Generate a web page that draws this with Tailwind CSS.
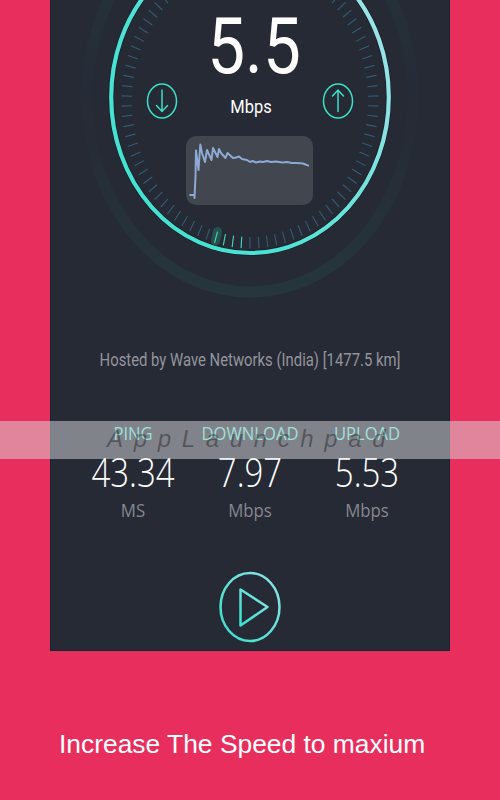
<!DOCTYPE html>
<html lang="en">
<head>
    <meta charset="UTF-8">
    <meta name="viewport" content="width=device-width, initial-scale=1.0">
    <title>Speed Test</title>
    <script src="https://cdn.jsdelivr.net/npm/@tailwindcss/browser@4"></script>
</head>
<body class="bg-[#e82e5c]">
    <div class="relative w-[500px] h-[800px] overflow-hidden bg-[#e82e5c]">

        <main class="relative mx-auto w-[400px] h-[651px] overflow-hidden bg-[#262a35] border-x border-b border-[#112532] flex flex-col items-center font-['Roboto',sans-serif]">
            <!-- gauge -->
            <svg class="absolute -left-px top-0" width="400" height="320" viewBox="50 0 400 320" fill="none">
                <defs>
                    <linearGradient id="ring" x1="0" y1="1" x2="1" y2="0.3">
                        <stop offset="0" stop-color="#3fe2d0"/>
                        <stop offset="0.4" stop-color="#4ce2d3"/>
                        <stop offset="1" stop-color="#9be3e6"/>
                    </linearGradient>
                    <linearGradient id="halo" gradientUnits="userSpaceOnUse" x1="0" y1="0" x2="0" y2="298">
                        <stop offset="0" stop-color="#263038"/>
                        <stop offset="0.25" stop-color="#262c37"/>
                        <stop offset="0.45" stop-color="#262b36"/>
                        <stop offset="1" stop-color="#26363d"/>
                    </linearGradient>
                </defs>
                <ellipse cx="250" cy="97" rx="163" ry="195" stroke="url(#halo)" stroke-width="11"/>
                <ellipse cx="250" cy="97" rx="138.8" ry="156" stroke="#191d28" stroke-width="5.600"/>
                <ellipse cx="250" cy="97" rx="138.8" ry="156" stroke="url(#ring)" stroke-width="4.200"/>
                <path d="M217.500 231.500L215.500 241" stroke="#26514f" stroke-width="9" stroke-linecap="round"/>
                <g id="ticks" stroke="#325b78" stroke-width="1.100"></g>
            </svg>

            <div class="relative h-[92px] w-full text-center text-white text-[67.500px] leading-[92px] scale-y-[1.16] left-[4px]">5.5</div>
            <div class="relative h-[30px] w-full flex justify-between items-center px-24">
                <svg class="mt-[-12px] -ml-px" width="32" height="37" viewBox="0 0 32 37" fill="none" stroke="#3be0c8" stroke-width="1.5" stroke-linecap="round">
                    <ellipse cx="16" cy="18" rx="14.500" ry="17"/>
                    <path d="M16 7V28.500M10.500 22.500L16 28.500L21.500 22.500"/>
                </svg>
                <span class="relative left-px text-white text-[16.500px] scale-y-[1.16]">Mbps</span>
                <svg class="mt-[-12px] -mr-px" width="32" height="37" viewBox="0 0 32 37" fill="none" stroke="#3be0c8" stroke-width="1.5" stroke-linecap="round">
                    <ellipse cx="16" cy="18" rx="14.500" ry="17"/>
                    <path d="M16 28.500V7M10.500 13L16 7L21.500 13"/>
                </svg>
            </div>
            <div class="relative mt-[14px] -ml-px w-[127px] h-[69px] shrink-0 rounded-[10px] bg-[#42464e]">
                <svg width="127" height="69" viewBox="0 0 127 69" fill="none">
                    <path d="M4.500 59H8.500V62L9.500 40L10 14.500L12.500 34L14.300 8.500L16 17L19 26L21 14L25.500 24L27 12L31.500 21L33 13L35 17L39.500 22L41.500 17L47 22L50 21.500L53 20.500L56 23L61 24L64 26L67 25L70 26.500L74 25.500L77 26L81 25L85 26L90 25.500L96 26.500L101 26L106 27L111 27L117 27.500L122 29.500" stroke="#8da9d4" stroke-width="2" stroke-linejoin="round" stroke-linecap="square"/>
                </svg>
            </div>

            <div class="mt-[145px] h-[20px] leading-[20px] text-[14.850px] text-[#93959c] whitespace-nowrap scale-y-[1.2]">Hosted by Wave Networks (India) [1477.5 km]</div>

            <!-- results -->
            <div class="mt-[50px] grid grid-cols-3 w-[351px] text-center font-['Open_Sans','Noto_Sans',sans-serif]">
                <div>
                    <div class="h-[26px] leading-[26px] text-[16.600px] text-[#5fe8d4] scale-y-[1.12]">PING</div>
                    <div class="h-[52px] leading-[52px] text-[33px] font-light text-white scale-y-[1.22]">43.34</div>
                    <div class="h-[24px] leading-[24px] text-[16.800px] text-[#85878e] scale-y-[1.1]">MS</div>
                </div>
                <div>
                    <div class="h-[26px] leading-[26px] text-[16.600px] text-[#5fe8d4] scale-y-[1.12]">DOWNLOAD</div>
                    <div class="h-[52px] leading-[52px] text-[33px] font-light text-white scale-y-[1.22]">7.97</div>
                    <div class="h-[24px] leading-[24px] text-[16.800px] text-[#85878e] scale-y-[1.1]">Mbps</div>
                </div>
                <div>
                    <div class="h-[26px] leading-[26px] text-[16.600px] text-[#5fe8d4] scale-y-[1.12]">UPLOAD</div>
                    <div class="h-[52px] leading-[52px] text-[33px] font-light text-white scale-y-[1.22]">5.53</div>
                    <div class="h-[24px] leading-[24px] text-[16.800px] text-[#85878e] scale-y-[1.1]">Mbps</div>
                </div>
            </div>

            <svg class="mt-[49px] shrink-0" width="62" height="72" viewBox="0 0 62 72" fill="none">
                <defs>
                    <linearGradient id="play" x1="0" y1="1" x2="1" y2="0">
                        <stop offset="0.1" stop-color="#3fe2cf"/>
                        <stop offset="1" stop-color="#8fe2e4"/>
                    </linearGradient>
                </defs>
                <ellipse cx="31" cy="36" rx="29.500" ry="34" stroke="url(#play)" stroke-width="2.500"/>
                <path d="M21.500 18.500V54.500L48.500 36Z" stroke="url(#play)" stroke-width="2.500" stroke-linejoin="round"/>
            </svg>
        </main>

        <p class="mt-[77px] ml-[59px] text-white text-[26.400px] leading-[32px] whitespace-nowrap font-['Liberation_Sans',sans-serif]">Increase The Speed to maxium</p>

        <!-- watermark strip -->
        <div class="absolute inset-x-0 top-[421px] h-[38px] bg-[#d9dadc]/51 pl-[107px] leading-[36px] text-[24px] italic tracking-[10.650px] text-black/35 whitespace-nowrap font-['Liberation_Sans',sans-serif]">AppLaunchpad</div>
    </div>

    <script>
        // one tick every 4 degrees, starting at the bottom; the first ones are lit
        const ticks = document.getElementById('ticks');
        for (let i = 0; i < 90; i++) {
            const a = i * 4 * Math.PI / 180;
            const line = document.createElementNS('http://www.w3.org/2000/svg', 'line');
            line.setAttribute('x1', 250 - 118 * Math.sin(a));
            line.setAttribute('y1', 101 + 136 * Math.cos(a));
            line.setAttribute('x2', 250 - 128.5 * Math.sin(a));
            line.setAttribute('y2', 101 + 147.5 * Math.cos(a));
            if (i > 0 && i < 5) line.setAttribute('stroke', '#46d8c4');
            ticks.appendChild(line);
        }
    </script>
</body>
</html>
